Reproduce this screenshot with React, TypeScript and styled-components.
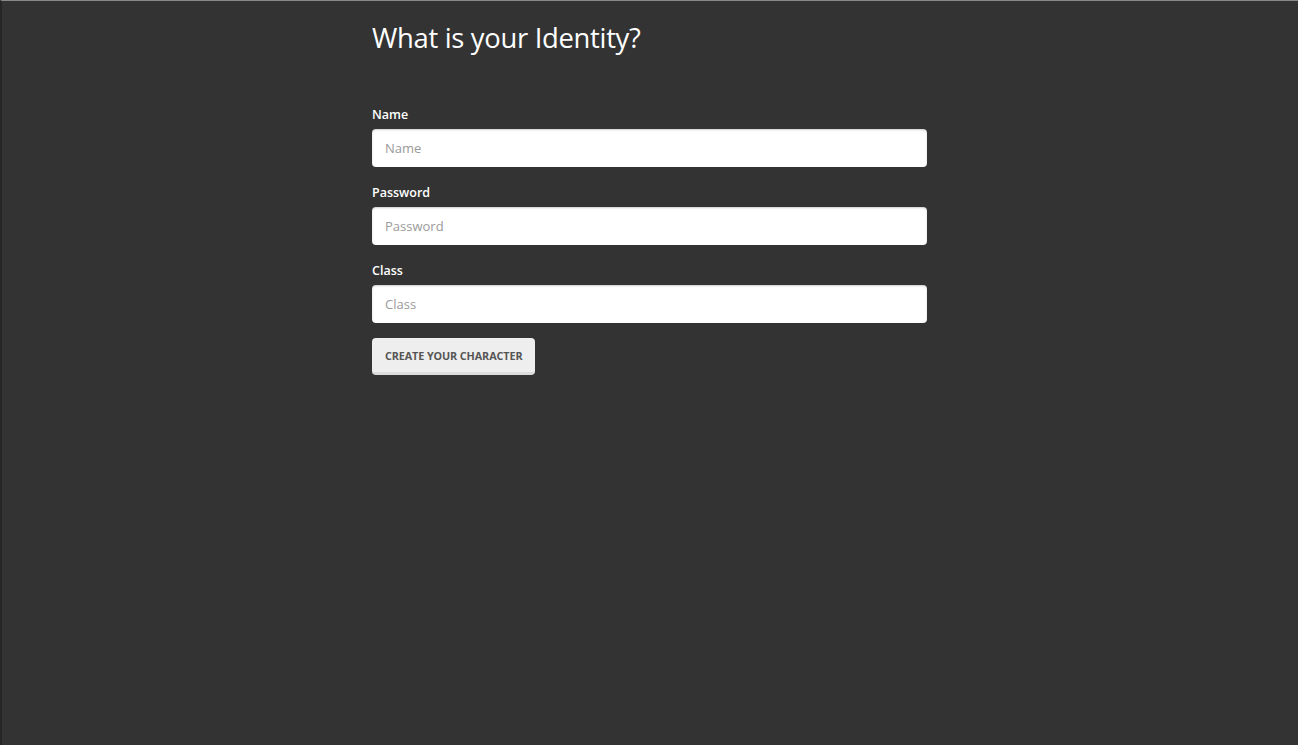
import React from "react";
import styled, { createGlobalStyle } from "styled-components";

const Global = createGlobalStyle`
  html, body { margin: 0; padding: 0; background: #333333; }
  body { font-family: "Open Sans", "Noto Sans", sans-serif; }
  * { box-sizing: border-box; }
`;

const Page = styled.div`
  min-height: 745px;
  background: #333333;
  border-top: 1px solid #8a8a8a;
  border-left: 2px solid #262626;
  display: flex;
  justify-content: center;
`;

const Container = styled.div`
  width: 555px;
  margin-left: -1px;
  padding-top: 19px;
`;

const Heading = styled.h1`
  margin: 0 0 49px;
  font-family: "Open Sans", sans-serif;
  font-weight: 400;
  font-size: 27.4px;
  line-height: 36px;
  color: #ffffff;
  letter-spacing: -0.3px;
`;

const Form = styled.form`
  display: flex;
  flex-direction: column;
`;

const Field = styled.div`
  display: flex;
  flex-direction: column;
  margin-bottom: 16px;
`;

const Label = styled.label`
  font-family: "Open Sans", sans-serif;
  font-size: 12.5px;
  font-weight: 600;
  line-height: 20px;
  color: #ffffff;
  margin-bottom: 4px;
`;

const Input = styled.input`
  height: 38px;
  width: 100%;
  border: none;
  border-radius: 4px;
  background: #ffffff;
  box-shadow: inset 0 1px 2px rgba(0, 0, 0, 0.2);
  padding: 0 13px;
  font-family: "Open Sans", sans-serif;
  font-size: 13px;
  color: #333;
  outline: none;
  &::placeholder { color: #9a9a9a; }
`;

const Button = styled.button`
  align-self: flex-start;
  height: 37px;
  margin-top: -1px;
  padding: 0 13px;
  border: none;
  border-bottom: 3px solid #dcdcdc;
  border-radius: 4px;
  background: #eeeeee;
  font-family: "Open Sans", sans-serif;
  font-weight: 700;
  font-size: 10.8px;
  letter-spacing: -0.1px;
  text-transform: uppercase;
  color: #555555;
  cursor: pointer;
`;

export default function App() {
  return (
    <>
      <Global />
      <Page>
        <Container>
          <Heading>What is your Identity?</Heading>
          <Form onSubmit={(e) => e.preventDefault()}>
            <Field>
              <Label>Name</Label>
              <Input placeholder="Name" />
            </Field>
            <Field>
              <Label>Password</Label>
              <Input type="password" placeholder="Password" />
            </Field>
            <Field>
              <Label>Class</Label>
              <Input placeholder="Class" />
            </Field>
            <Button type="submit">Create your character</Button>
          </Form>
        </Container>
      </Page>
    </>
  );
}
